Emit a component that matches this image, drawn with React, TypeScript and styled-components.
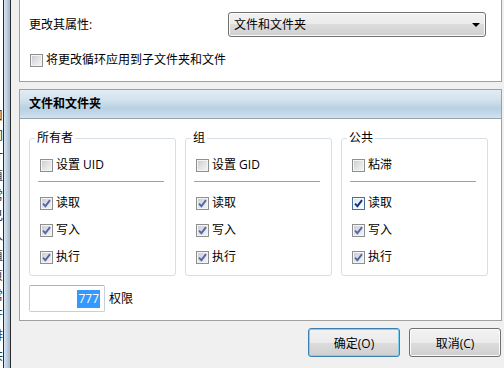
import React from "react";
import styled, { createGlobalStyle } from "styled-components";

const GlobalStyle = createGlobalStyle`
  html, body { margin: 0; padding: 0; background: #f0f0f0; }
  body {
    font-family: "Open Sans", "Noto Sans CJK SC", sans-serif;
    font-size: 12px;
    color: #000;
  }
`;

const Screen = styled.div`
  width: 504px;
  height: 368px;
  display: flex;
  overflow: hidden;
  background: #f0f0f0;
`;

/* the window behind the dialog, only its edge shows */
const BackWindow = styled.div`
  display: flex;
  flex: none;
  width: 11px;
`;

const BackText = styled.div`
  width: 3px;
  overflow: hidden;
  background: #fff;
  color: #333;
  padding-top: 106px;
  line-height: 20px;
  font-size: 12px;
`;

const BackGlyph = styled.div`
  width: 12px;
  margin-left: -9px;
  height: 20px;
`;

const FrameEdge = styled.div`
  width: 1px;
  background: #2c2c2c;
`;

const FrameBand = styled.div`
  width: 6px;
  background: linear-gradient(90deg, #dbe6f1 0%, #b6c9dd 60%, #9fb5cd 100%);
`;

const Dialog = styled.div`
  flex: 1;
  display: flex;
  flex-direction: column;
  padding: 0 3px 0 8px;
`;

const TopPanel = styled.div`
  height: 82px;
  box-sizing: border-box;
  background: #fff;
  border: 1px solid #a0a0a0;
  border-top: 0;
  padding: 12px 15px 0 9px;
`;

const PropRow = styled.div`
  display: flex;
  align-items: center;
  height: 25px;
  line-height: 25px;
`;

const Select = styled.div`
  margin-left: auto;
  width: 258px;
  height: 25px;
  box-sizing: border-box;
  border: 1px solid #707070;
  border-radius: 3px;
  background: linear-gradient(#f2f2f2 0%, #ebebeb 50%, #dddddd 50%, #cfcfcf 100%);
  box-shadow: inset 0 0 0 1px #fbfbfb;
  display: flex;
  align-items: center;
  justify-content: space-between;
  padding: 0 5px 0 5px;
`;

const Arrow = styled.span`
  width: 0;
  height: 0;
  border-left: 4px solid transparent;
  border-right: 4px solid transparent;
  border-top: 4px solid #000;
`;

const Option = styled.label<{ $top?: number }>`
  display: flex;
  align-items: center;
  gap: 3px;
  height: 20px;
  line-height: 20px;
  margin-top: ${(p) => p.$top ?? 0}px;
`;

const Recurse = styled(Option)`
  padding-left: 1px;
`;

const Box = styled.span<{ $hot?: boolean }>`
  flex: none;
  width: 13px;
  height: 13px;
  box-sizing: border-box;
  border: 1px solid ${(p) => (p.$hot ? "#4b6f95" : "#8e8f8f")};
  background: ${(p) =>
    p.$hot
      ? "linear-gradient(135deg, #cfe4f3 0%, #eef7fd 60%, #fafdff 100%)"
      : "linear-gradient(135deg, #c6c9ce 0%, #e4e5e7 55%, #f5f5f5 100%)"};
  box-shadow: inset 0 0 0 1px ${(p) => (p.$hot ? "#f2f9fe" : "#f4f4f4")};
  display: flex;
  align-items: center;
  justify-content: center;
`;

const Section = styled.div`
  margin-top: 7px;
  height: 232px;
  box-sizing: border-box;
  background: #fff;
  border: 1px solid #a0a0a0;
  display: flex;
  flex-direction: column;
`;

const SectionHeader = styled.div`
  height: 28px;
  line-height: 28px;
  padding-left: 9px;
  font-weight: bold;
  border-bottom: 1px solid #94a2ae;
  background: linear-gradient(
    #e2ecf4 0%,
    #d2e2ee 35%,
    #b9d1e3 65%,
    #c4d8e8 85%,
    #d3e3ef 100%
  );
`;

const SectionBody = styled.div`
  padding: 11px 13px 0 9px;
`;

const Groups = styled.div`
  display: grid;
  grid-template-columns: repeat(3, 147px);
  column-gap: 9px;
`;

const Group = styled.fieldset`
  margin: 0;
  min-width: 0;
  padding: 0 10px 8px 10px;
  border: 1px solid #d5dfe5;
  border-radius: 3px;
`;

const GroupTitle = styled.legend`
  margin-left: -5px;
  padding: 0 2px;
  height: 16px;
  line-height: 16px;
`;

const Rule = styled.div`
  height: 1px;
  background: #a0a0a0;
  margin: 6px 1px 0 -2px;
`;

const PermList = styled.div`
  display: grid;
  row-gap: 7px;
  margin-top: 11px;
`;

const ModeRow = styled.div`
  display: flex;
  align-items: center;
  gap: 4px;
  margin-top: 9px;
  line-height: 20px;
`;

const ModeBox = styled.div`
  width: 76px;
  height: 27px;
  box-sizing: border-box;
  border: 1px solid #c5d0db;
  border-top-color: #a9b5c2;
  border-radius: 2px;
  display: flex;
  align-items: center;
  justify-content: flex-end;
  padding-right: 4px;
`;

const Selected = styled.span`
  background: #3399ff;
  color: #fff;
  line-height: 18px;
  padding: 0 1px;
`;

const Buttons = styled.div`
  display: flex;
  justify-content: flex-end;
  gap: 9px;
  margin-top: 7px;
  padding-right: 1px;
`;

const Button = styled.button<{ $focus?: boolean }>`
  width: 92px;
  height: 29px;
  box-sizing: border-box;
  font: inherit;
  color: #000;
  border: 1px solid ${(p) => (p.$focus ? "#3c7fb1" : "#707070")};
  border-radius: 3px;
  background: linear-gradient(#f2f2f2 0%, #ebebeb 50%, #dddddd 50%, #cfcfcf 100%);
  box-shadow: inset 0 0 0 1px ${(p) => (p.$focus ? "#7fd0f2" : "#fbfbfb")};
  padding: 0;
`;

function Check({ on, hot }: { on?: boolean; hot?: boolean }) {
  return (
    <Box $hot={hot}>
      {on && (
        <svg width="9" height="9" viewBox="0 0 9 9">
          <path
            d="M1 4.6 L3.4 7.2 L8 1.2"
            fill="none"
            stroke={hot ? "#1b2f7c" : "#5468a8"}
            strokeWidth="1.9"
          />
        </svg>
      )}
    </Box>
  );
}

const groups = [
  { title: "所有者", special: "设置 UID", hot: false },
  { title: "组", special: "设置 GID", hot: false },
  { title: "公共", special: "粘滞", hot: true },
];

const backChars = ["口", "间", "计", "值", "常", "己", "入", "值", "页", "常", "开", "排", "共"];

export default function App() {
  return (
    <>
      <GlobalStyle />
      <Screen>
        <BackWindow>
          <BackText>
            {backChars.map((c, i) => (
              <BackGlyph key={i}>{c}</BackGlyph>
            ))}
          </BackText>
          <FrameEdge />
          <FrameBand />
          <FrameEdge />
        </BackWindow>
        <Dialog>
          <TopPanel>
            <PropRow>
              <span>更改其属性:</span>
              <Select>
                <span>文件和文件夹</span>
                <Arrow />
              </Select>
            </PropRow>
            <Recurse $top={13}>
              <Check />
              <span>将更改循环应用到子文件夹和文件</span>
            </Recurse>
          </TopPanel>
          <Section>
            <SectionHeader>文件和文件夹</SectionHeader>
            <SectionBody>
              <Groups>
                {groups.map((g) => (
                  <Group key={g.title}>
                    <GroupTitle>{g.title}</GroupTitle>
                    <Option $top={9}>
                      <Check />
                      <span>{g.special}</span>
                    </Option>
                    <Rule />
                    <PermList>
                      <Option>
                        <Check on hot={g.hot} />
                        <span>读取</span>
                      </Option>
                      <Option>
                        <Check on />
                        <span>写入</span>
                      </Option>
                      <Option>
                        <Check on />
                        <span>执行</span>
                      </Option>
                    </PermList>
                  </Group>
                ))}
              </Groups>
              <ModeRow>
                <ModeBox>
                  <Selected>777</Selected>
                </ModeBox>
                <span>权限</span>
              </ModeRow>
            </SectionBody>
          </Section>
          <Buttons>
            <Button $focus>确定(O)</Button>
            <Button>取消(C)</Button>
          </Buttons>
        </Dialog>
      </Screen>
    </>
  );
}
